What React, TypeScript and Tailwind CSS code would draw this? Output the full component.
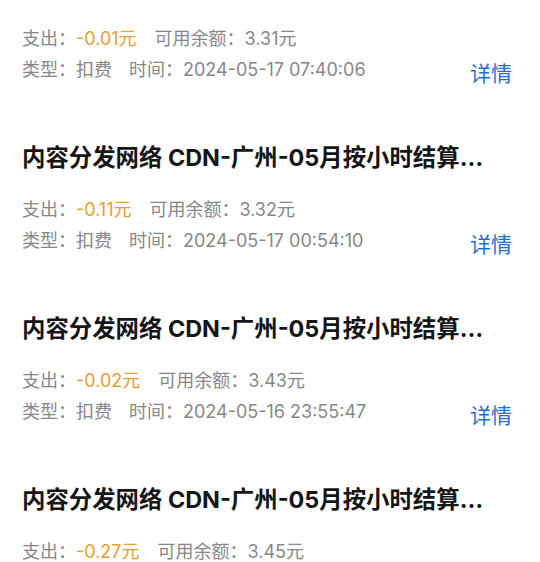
const records = [
  { out: "-0.01元", balance: "3.31元", time: "2024-05-17 07:40:06" },
  { out: "-0.11元", balance: "3.32元", time: "2024-05-17 00:54:10" },
  { out: "-0.02元", balance: "3.43元", time: "2024-05-16 23:55:47" },
  { out: "-0.27元", balance: "3.45元", time: "2024-05-16 22:51:02" },
];

const title = "内容分发网络 CDN-广州-05月按小时结算计费";

export default function App() {
  return (
    <div
      className="w-[540px] h-[562px] overflow-hidden bg-white"
      style={{ fontFamily: 'Inter, "Noto Sans CJK SC", sans-serif' }}
    >
      <div className="-mt-[57px]">
        {records.map((r, i) => (
          <div key={i} className="pl-[22px] pr-[28px] pt-[29px] pb-[29px]">
            {/* title */}
            <h3 className="w-[470px] truncate text-[23.4px] leading-[30px] font-bold text-[#151515]">
              {title}
            </h3>
            {/* amounts + detail link */}
            <div className="mt-[21px] flex items-end justify-between">
              <div className="text-[18px] leading-[31px] text-[#878787]">
                <div className="flex gap-[18px]">
                  <span>
                    支出：<span className="text-[#e5a02f]">{r.out}</span>
                  </span>
                  <span>可用余额：{r.balance}</span>
                </div>
                <div className="flex gap-[17px]">
                  <span>类型：扣费</span>
                  <span>时间：{r.time}</span>
                </div>
              </div>
              <a className="mb-[-3px] text-[21px] leading-[28px] text-[#1f6fd1]">详情</a>
            </div>
          </div>
        ))}
      </div>
    </div>
  );
}
